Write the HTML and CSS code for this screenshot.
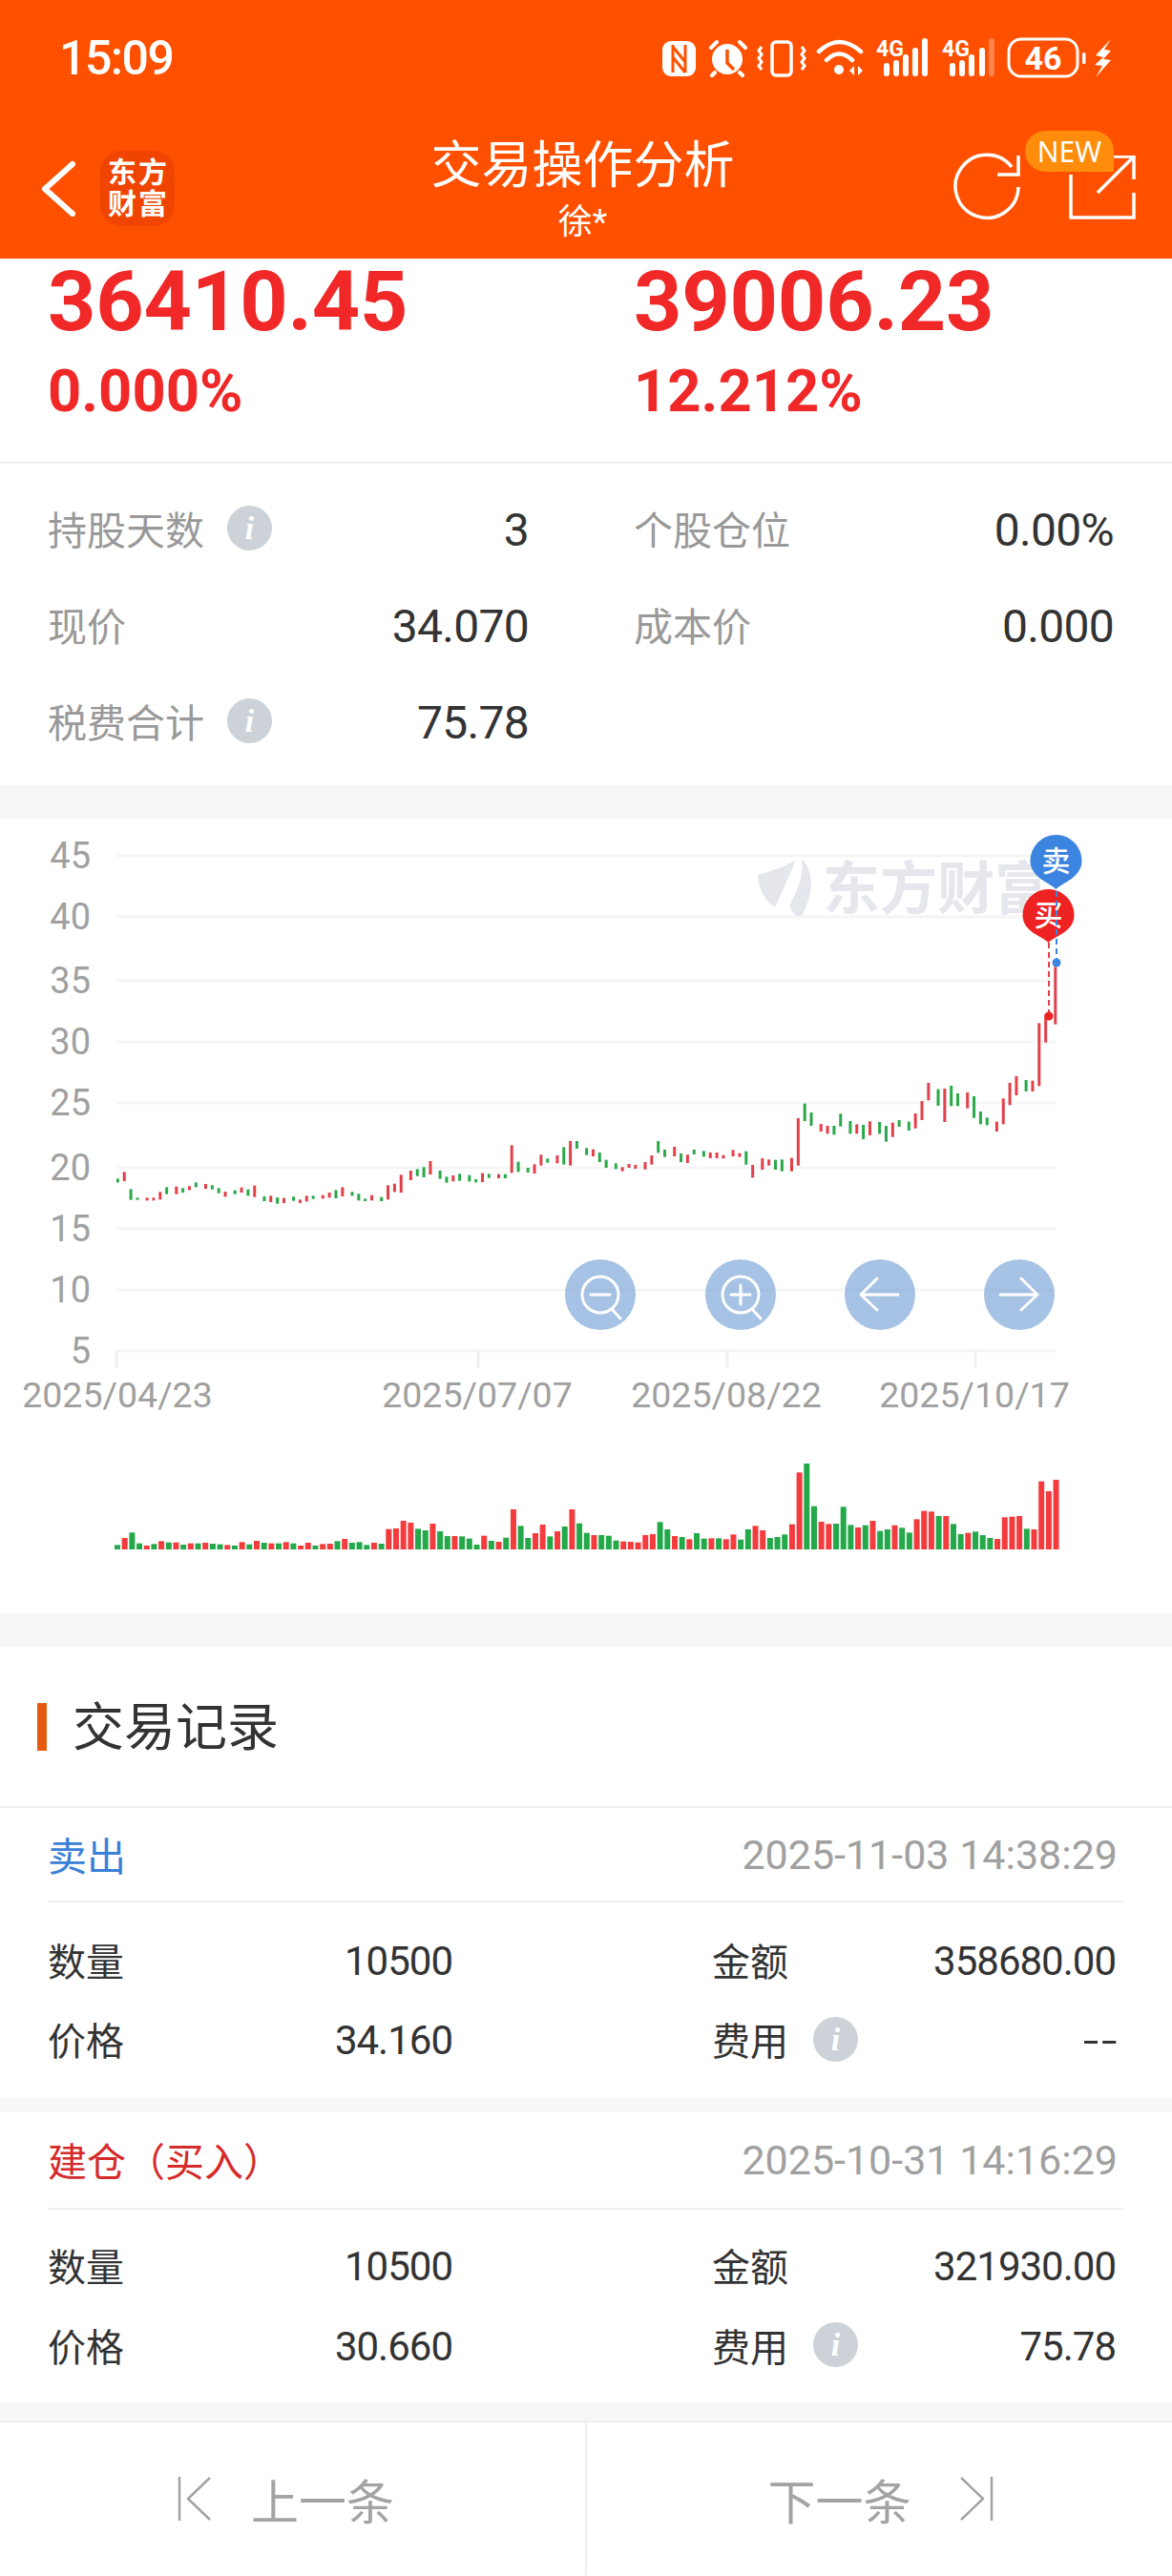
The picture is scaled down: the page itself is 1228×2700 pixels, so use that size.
FILE: index.html
```html
<!DOCTYPE html>
<html lang="zh-CN">
<head>
  <meta charset="UTF-8">
  <meta name="viewport" content="width=device-width, initial-scale=1.0">
  <title>交易操作分析</title>
  <link rel="stylesheet" href="styles.css">
</head>
<body>
  <header class="top">
    <div class="status-bar">
      <span class="clock">15:09</span>
      <svg class="status-icons" width="480" height="50" viewBox="690 36 480 50">
        <!-- nfc -->
        <rect x="694" y="43" width="35" height="37" rx="9" fill="#fff"/>
        <path d="M705 47V76M718 47V76M705 49L718 65M705 60L718 76" stroke="#ff5000" stroke-width="3" fill="none"/>
        <!-- alarm -->
        <circle cx="762" cy="62" r="16" fill="#fff"/>
        <path d="M745 50L751 44M775 44L781 50M749 76L746 79M775 76L778 79" stroke="#fff" stroke-width="4" stroke-linecap="round"/>
        <path d="M762 52V66L769 73" stroke="#ff5000" stroke-width="3.5" fill="none"/>
        <!-- vibrate -->
        <rect x="809" y="44" width="20" height="35" rx="4" stroke="#fff" stroke-width="3.5" fill="none"/>
        <path d="M798 49l-3 4 3 4-3 4 3 4-3 4 3 4" stroke="#fff" stroke-width="3" fill="none"/>
        <path d="M840 49l3 4-3 4 3 4-3 4 3 4-3 4" stroke="#fff" stroke-width="3" fill="none"/>
        <!-- wifi -->
        <path d="M858 54Q879 34 902 54M866 63Q879 50 893 63" stroke="#fff" stroke-width="4.5" stroke-linecap="round" fill="none"/>
        <circle cx="879" cy="73" r="5" fill="#fff"/>
        <path d="M890 74l5-5v10zM899 69l5 5-5 5z" fill="#fff"/>
        <!-- mobile signal, two cards -->
        <text class="net" x="918" y="59">4G</text>
        <path d="M929 69V77M939 66V77M949 60V77M959 53V77M969 43V77" stroke="#fff" stroke-width="6" stroke-linecap="round"/>
        <text class="net" x="987" y="59">4G</text>
        <path d="M998 69V77M1008 66V77M1018 60V77M1029 53V77" stroke="#fff" stroke-width="6" stroke-linecap="round"/>
        <path d="M1039 43V77" stroke="#fff" stroke-opacity=".3" stroke-width="6" stroke-linecap="round"/>
        <!-- battery -->
        <rect x="1057" y="41" width="72" height="39" rx="13" stroke="#fff" stroke-width="3" fill="none"/>
        <text class="batt" x="1093" y="73" text-anchor="middle">46</text>
        <rect x="1134" y="55" width="3.5" height="12" rx="1.5" fill="#fff"/>
        <path d="M1164 41L1148 58L1156 60L1147 68L1155 69L1148 81L1164 63L1156 62L1164 53L1157 52Z" fill="#fff"/>
      </svg>
    </div>
    <nav class="nav">
      <div class="nav-left">
        <svg class="back" width="40" height="64" viewBox="0 0 40 64"><path d="M33 6L4 32L33 58" stroke="#fff" stroke-width="6" stroke-linecap="round" stroke-linejoin="round" fill="none"/></svg>
        <div class="logo"><span>东方</span><span>财富</span></div>
      </div>
      <div class="nav-title">
        <h1>交易操作分析</h1>
        <p>徐*</p>
      </div>
      <div class="nav-right">
        <svg width="74" height="74" viewBox="0 0 74 74">
          <path d="M71 36A33 33 0 1 1 64 15" stroke="#fff" stroke-width="3.5" fill="none"/>
          <path d="M49 23H71V3" stroke="#fff" stroke-width="3.5" fill="none"/>
        </svg>
        <div class="share">
          <span class="badge">NEW</span>
          <svg width="72" height="70" viewBox="0 0 72 70">
            <path d="M4 20V65H70V39" stroke="#fff" stroke-width="3.5" fill="none"/>
            <path d="M49 1H70V25M70 1L32 39" stroke="#fff" stroke-width="3.5" fill="none"/>
          </svg>
        </div>
      </div>
    </nav>
  </header>

  <section class="summary">
    <div>
      <div class="amount">36410.45</div>
      <div class="rate">0.000%</div>
    </div>
    <div>
      <div class="amount">39006.23</div>
      <div class="rate">12.212%</div>
    </div>
  </section>

  <section class="facts">
    <div class="fact"><span class="fact-label">持股天数<i class="info">i</i></span><span class="fact-value">3</span></div>
    <div class="fact"><span class="fact-label">个股仓位</span><span class="fact-value">0.00%</span></div>
    <div class="fact"><span class="fact-label">现价</span><span class="fact-value">34.070</span></div>
    <div class="fact"><span class="fact-label">成本价</span><span class="fact-value">0.000</span></div>
    <div class="fact"><span class="fact-label">税费合计<i class="info">i</i></span><span class="fact-value">75.78</span></div>
  </section>

  <section class="chart-box">
    <!-- viewBox keeps the page's own y values so the data below reads straight -->
    <svg id="chart" width="1228" height="833" viewBox="0 858 1228 833">
      <g class="watermark">
        <path d="M794 917C810 912 825 908 834 901C828 915 822 930 812 951C803 945 795 935 794 917Z"/>
        <path d="M840 900C852 912 855 935 838 964C830 956 826 950 828 947C838 930 842 915 840 900Z"/>
        <text x="862" y="953">东方财富</text>
      </g>
      <g id="grid"></g>
      <g id="candles"></g>
      <g id="volume"></g>
      <g id="marks">
        <path d="M1106.5 932C1100 925 1079.5 920 1079.5 902A27 27 0 1 1 1133.5 902C1133.5 920 1113 925 1106.5 932Z" fill="#3b84e0"/>
        <text class="mark-text" x="1106.5" y="913">卖</text>
        <path d="M1098.5 988C1092 981 1071.5 977 1071.5 959A27 27 0 1 1 1125.5 959C1125.5 977 1105 981 1098.5 988Z" fill="#ee2222"/>
        <text class="mark-text" x="1098.5" y="970">买</text>
        <path d="M1099 988V1065" stroke="#e0404a" stroke-width="2" stroke-dasharray="6 4"/>
        <circle cx="1099" cy="1065" r="4.5" fill="#ee2222"/>
        <path d="M1107 934V1009" stroke="#3b84e0" stroke-width="2" stroke-dasharray="6 4"/>
        <circle cx="1107" cy="1009" r="4.5" fill="#3b84e0"/>
      </g>
      <g class="zoom-btns">
        <circle cx="629" cy="1357" r="37"/>
        <circle cx="776" cy="1357" r="37"/>
        <circle cx="922" cy="1357" r="37"/>
        <circle cx="1068" cy="1357" r="37"/>
      </g>
      <g class="zoom-icons">
        <circle cx="629" cy="1357" r="19"/>
        <path d="M619 1357H639M641 1372L650 1382"/>
        <circle cx="776" cy="1357" r="19"/>
        <path d="M766 1357H786M776 1347V1367M788 1372L797 1382"/>
        <path d="M902 1357H941M919 1340L902 1357L919 1373"/>
        <path d="M1048 1357H1087M1070 1340L1087 1357L1070 1373"/>
      </g>
    </svg>
  </section>

  <section class="records">
    <h2 class="records-title">交易记录</h2>

    <div class="record">
      <div class="record-head">
        <span class="side-sell">卖出</span>
        <span class="record-time">2025-11-03 14:38:29</span>
      </div>
      <div class="record-body">
        <div class="cell"><span>数量</span><b>10500</b></div>
        <div class="cell"><span>金额</span><b>358680.00</b></div>
        <div class="cell"><span>价格</span><b>34.160</b></div>
        <div class="cell"><span>费用<i class="info">i</i></span><b class="no-fee">--</b></div>
      </div>
    </div>

    <div class="record">
      <div class="record-head">
        <span class="side-buy">建仓（买入）</span>
        <span class="record-time">2025-10-31 14:16:29</span>
      </div>
      <div class="record-body">
        <div class="cell"><span>数量</span><b>10500</b></div>
        <div class="cell"><span>金额</span><b>321930.00</b></div>
        <div class="cell"><span>价格</span><b>30.660</b></div>
        <div class="cell"><span>费用<i class="info">i</i></span><b>75.78</b></div>
      </div>
    </div>
  </section>

  <footer class="pager">
    <div class="pager-btn prev">
      <svg width="36" height="48" viewBox="0 0 36 48"><path d="M2 1V47M34 2L11 24L34 46" stroke="#a3a3a3" stroke-width="2.5" fill="none"/></svg>
      <span>上一条</span>
    </div>
    <div class="pager-btn next">
      <span>下一条</span>
      <svg width="36" height="48" viewBox="0 0 36 48"><path d="M34 1V47M2 2L25 24L2 46" stroke="#a3a3a3" stroke-width="2.5" fill="none"/></svg>
    </div>
  </footer>

  <script src="chart.js"></script>
</body>
</html>
```

FILE: styles.css
```css
* { box-sizing: border-box; }
html, body { margin: 0; background: #fff; }
body { width: 1228px; height: 2700px; overflow: hidden; font-family: Roboto, "Noto Sans CJK SC", sans-serif; color: #333; }

.top { height: 271px; background: #ff5000; color: #fff; }
.status-bar { height: 124px; padding: 0 58px 2px 62px; display: flex; align-items: center; justify-content: space-between; }
.clock { font-size: 50px; font-weight: 500; letter-spacing: -1.5px; }
.status-icons { display: block; }
.net { font: 700 23px Roboto, sans-serif; fill: #fff; }
.batt { font: 700 34px Roboto, sans-serif; fill: #fff; }

.nav { height: 147px; padding: 0 38px 0 43px; display: grid; grid-template-columns: 1fr auto 1fr; }
.nav-left { display: flex; align-items: center; }
.back { display: block; }
.logo { width: 78px; height: 79px; margin-left: 22px; border-radius: 22px; background: #f04500; display: flex; flex-direction: column; align-items: center; justify-content: center; gap: 3px; padding-left: 2px; font-size: 30px; font-weight: 700; line-height: 30px; letter-spacing: 2px; }
.nav-title { text-align: center; padding: 18px 12px 0 0; }
.nav-title h1 { margin: 0; font-size: 53px; font-weight: 400; line-height: 64px; }
.nav-title p { margin: 0; font-size: 36px; line-height: 54px; }
.nav-right { display: flex; justify-content: flex-end; gap: 48px; padding-top: 36px; }
.nav-right svg { display: block; }
.share { position: relative; width: 72px; height: 70px; margin-top: 3px; }
.badge { position: absolute; left: -44px; top: -26px; width: 93px; height: 43px; background: #ff8c0a; border-radius: 24px 24px 0 24px; font: 400 30px/43px "Noto Sans", sans-serif; text-align: center; color: #fff; }

.summary { height: 215px; padding: 1px 0 0 50px; display: grid; grid-template-columns: 614px 1fr; border-bottom: 2px solid #eee; color: #f02828; }
.amount { font-size: 88px; font-weight: 700; line-height: 88px; letter-spacing: -.2px; }
.rate { font-size: 61.5px; font-weight: 700; line-height: 66px; margin-top: 17px; }

.facts { height: 372px; padding: 18px 0 0 50px; display: grid; grid-template-columns: 504px 503px; grid-auto-rows: 101px; column-gap: 110px; border-bottom: 35px solid #f7f7f7; }
.fact { display: flex; align-items: center; justify-content: space-between; }
.fact-label { display: flex; align-items: center; padding-bottom: 3px; font-size: 41px; color: #999; }
.fact-label .info { margin-left: 24px; }
.fact-value { font-size: 48px; letter-spacing: -.7px; padding-top: 2px; }
.info { width: 47px; height: 47px; margin-left: 26px; border-radius: 50%; background: #cdd2d9; color: #fff; font: italic 700 34px/47px "Liberation Serif", serif; text-align: center; display: inline-block; }

.chart-box { height: 868px; border-bottom: 35px solid #f7f7f7; }
#chart { display: block; }
.watermark { fill: #e6e7ec; }
.watermark text { font: 700 60px "Noto Sans CJK SC", sans-serif; }
.axis-text { font: 38px Roboto, sans-serif; fill: #a0a0a0; }
.date-text { font-size: 37.5px; }
.mark-text { font: 500 30px "Noto Sans CJK SC", sans-serif; fill: #fff; text-anchor: middle; }
.zoom-btns circle { fill: #6f9dd3; fill-opacity: .62; }
.zoom-icons circle, .zoom-icons path { fill: none; stroke: #fff; stroke-width: 3; stroke-linecap: round; stroke-linejoin: round; }

.records-title { height: 169px; margin: 0; padding: 0 0 6px 39px; display: flex; align-items: center; gap: 27px; font-size: 54px; font-weight: 400; border-bottom: 2px solid #eee; }
.records-title::before { content: ""; width: 10px; height: 50px; margin-top: 6px; background: #e65a10; }

.record { border-bottom: 16px solid #f7f7f7; }
.record:last-child { border-bottom-width: 19px; }
.record-head { height: 99px; margin: 0 50px; padding-right: 7px; display: flex; align-items: center; justify-content: space-between; font-size: 41px; border-bottom: 2px solid #f0f0f0; }
.record + .record .record-head { height: 102px; }
.side-sell { color: #3a80d6; padding-bottom: 2px; }
.side-buy { color: #d62b2b; padding-bottom: 2px; }
.record-time { font-size: 43px; color: #a0a0a0; }
.record-body { padding: 20px 59px 18px 50px; display: grid; grid-template-columns: 424px 423px; column-gap: 272px; grid-auto-rows: 83px; }
.record + .record .record-body { padding-top: 17px; padding-bottom: 17px; grid-auto-rows: 84px; }
.cell { display: flex; align-items: center; justify-content: space-between; font-size: 40px; }
.cell span { display: flex; align-items: center; padding-bottom: 3px; }
.cell b { font-size: 42px; font-weight: 400; letter-spacing: -1px; }
.cell .no-fee { margin-right: -4px; font-size: 60px; letter-spacing: 2px; font-weight: 300; line-height: 60px; }

.pager { height: 162px; display: flex; border-top: 2px solid #eee; color: #a3a3a3; font-size: 50px; }
.pager-btn { flex: 1; display: flex; align-items: center; justify-content: center; }
.pager-btn svg { display: block; }
.prev { gap: 41px; padding-right: 14px; border-right: 2px solid #eee; flex: none; width: 615px; }
.next { gap: 50px; padding-left: 2px; }
```

FILE: chart.js
```javascript
const NS = 'http://www.w3.org/2000/svg';
const RED = '#e2404a', GREEN = '#2aa84a';

// [top, bottom, colour], thirds of a pixel below y=860
const candles = [
  [1126,1138,'g'],[1105,1134,'r'],[1159,1193,'g'],[1186,1193,'g'],[1186,1195,'r'],[1186,1195,'r'],
  [1168,1192,'r'],[1153,1175,'g'],[1151,1175,'r'],[1156,1170,'g'],[1150,1162,'r'],[1138,1153,'g'],
  [1143,1158,'r'],[1147,1160,'g'],[1156,1172,'g'],[1167,1183,'r'],[1163,1175,'g'],[1154,1170,'r'],
  [1160,1180,'g'],[1148,1184,'r'],[1182,1197,'g'],[1180,1200,'r'],[1185,1205,'g'],[1187,1203,'r'],
  [1183,1196,'g'],[1192,1203,'r'],[1180,1198,'r'],[1180,1190,'g'],[1178,1189,'r'],[1170,1186,'r'],
  [1162,1188,'g'],[1153,1182,'r'],[1168,1180,'g'],[1174,1195,'g'],[1189,1197,'g'],[1178,1195,'r'],
  [1184,1197,'g'],[1147,1192,'r'],[1142,1168,'r'],[1114,1170,'r'],[1101,1131,'r'],[1096,1118,'g'],
  [1090,1122,'g'],[1071,1113,'r'],[1101,1127,'g'],[1120,1139,'g'],[1116,1135,'r'],[1111,1133,'g'],
  [1115,1135,'g'],[1128,1138,'g'],[1109,1137,'r'],[1111,1124,'g'],[1112,1125,'r'],[1112,1125,'g'],
  [1021,1108,'r'],[1073,1105,'g'],[1092,1107,'g'],[1081,1110,'r'],[1051,1085,'r'],[1063,1076,'g'],
  [1053,1078,'r'],[1027,1082,'g'],[1008,1085,'r'],[1008,1032,'g'],[1030,1052,'g'],[1034,1056,'r'],
  [1044,1074,'g'],[1067,1092,'g'],[1078,1096,'g'],[1090,1103,'r'],[1080,1092,'r'],[1083,1095,'r'],
  [1074,1097,'r'],[1053,1082,'r'],[1008,1045,'g'],[1035,1058,'g'],[1026,1056,'r'],[1047,1074,'g'],
  [1051,1077,'r'],[1035,1050,'g'],[1039,1057,'g'],[1044,1062,'r'],[1044,1062,'r'],[1052,1063,'r'],
  [1036,1056,'r'],[1046,1058,'r'],[1040,1082,'g'],[1083,1123,'r'],[1062,1098,'r'],[1066,1085,'r'],
  [1067,1098,'g'],[1066,1103,'g'],[1061,1103,'r'],[936,1085,'r'],[890,945,'g'],[918,960,'g'],
  [954,978,'r'],[960,985,'r'],[960,988,'g'],[922,962,'g'],[945,985,'g'],[955,985,'r'],
  [957,1002,'g'],[946,990,'r'],[948,985,'g'],[960,1010,'g'],[950,995,'r'],[942,963,'g'],
  [947,975,'g'],[921,968,'r'],[882,942,'r'],[825,880,'r'],[845,897,'g'],[843,948,'r'],
  [834,898,'g'],[858,898,'g'],[855,905,'r'],[867,935,'g'],[915,955,'g'],[934,958,'g'],
  [947,978,'r'],[874,955,'r'],[825,895,'r'],[804,864,'r'],[816,852,'g'],[818,852,'r'],
  [637,835,'r'],[610,698,'r'],[460,641,'r']
];

// bar tops, same thirds of a pixel, above the y=1624 base line
const volumes = [
  [358,'g'],[336,'r'],[319,'g'],[353,'g'],[360,'r'],[355,'g'],[346,'r'],[350,'g'],[350,'r'],[357,'g'],
  [353,'r'],[353,'g'],[351,'r'],[354,'g'],[356,'g'],[358,'r'],[360,'g'],[349,'r'],[356,'g'],[345,'r'],
  [351,'g'],[353,'r'],[353,'g'],[349,'r'],[353,'g'],[360,'r'],[351,'r'],[360,'g'],[355,'r'],[354,'r'],
  [346,'g'],[339,'r'],[351,'g'],[349,'g'],[358,'g'],[351,'r'],[354,'g'],[308,'r'],[306,'r'],[282,'r'],
  [288,'r'],[307,'g'],[312,'g'],[291,'r'],[315,'g'],[330,'g'],[330,'r'],[331,'g'],[338,'g'],[357,'g'],
  [329,'r'],[345,'g'],[348,'r'],[335,'g'],[246,'r'],[298,'g'],[336,'g'],[321,'r'],[294,'r'],[331,'g'],
  [315,'r'],[300,'g'],[246,'r'],[290,'g'],[320,'g'],[327,'r'],[327,'g'],[329,'g'],[344,'g'],[347,'r'],
  [348,'r'],[350,'r'],[327,'r'],[324,'r'],[286,'g'],[309,'g'],[330,'r'],[333,'g'],[340,'r'],[321,'g'],
  [338,'g'],[337,'r'],[337,'g'],[340,'r'],[325,'r'],[341,'g'],[309,'g'],[298,'r'],[312,'r'],[336,'g'],
  [333,'g'],[325,'g'],[293,'r'],[130,'r'],[102,'g'],[236,'g'],[285,'r'],[292,'r'],[291,'g'],[238,'g'],
  [295,'g'],[303,'r'],[296,'g'],[282,'r'],[314,'g'],[309,'g'],[296,'r'],[304,'g'],[319,'g'],[277,'r'],
  [251,'r'],[253,'r'],[267,'g'],[267,'r'],[292,'g'],[324,'g'],[320,'r'],[316,'g'],[327,'g'],[336,'g'],
  [339,'r'],[271,'r'],[269,'r'],[267,'r'],[307,'g'],[309,'r'],[158,'r'],[189,'r'],[153,'r']
];

const yTicks = [[45,897],[40,961],[35,1028],[30,1092],[25,1156],[20,1224],[15,1288],[10,1352],[5,1416]];
const xTicks = [[122,'2025/04/23',123],[501,'2025/07/07',500],[762,'2025/08/22',761],[1022,'2025/10/17',1021]];

function add(parent, tag, attrs, text) {
  const el = document.createElementNS(NS, tag);
  for (const k in attrs) el.setAttribute(k, attrs[k]);
  if (text !== undefined) el.textContent = text;
  parent.appendChild(el);
  return el;
}

const grid = document.getElementById('grid');
yTicks.forEach(([val, y]) => {
  add(grid, 'rect', { x: 122, y: y - 1.5, width: 985, height: 3, fill: '#f5f5f5' });
  add(grid, 'text', { class: 'axis-text', x: 95, y: y + 13, 'text-anchor': 'end' }, val);
});
xTicks.forEach(([x, label, textX]) => {
  add(grid, 'rect', { x: x - 1.5, y: 1416, width: 3, height: 18, fill: '#f0f0f0' });
  add(grid, 'text', { class: 'axis-text date-text', x: textX, y: 1475, 'text-anchor': 'middle' }, label);
});

// candles come in runs of four on the canvas
const candleBox = document.getElementById('candles');
candles.forEach(([top, bottom, c], i) => {
  const x = 123.4 + Math.floor(i / 4) * 30.7 + (i % 4) * 6.85;
  add(candleBox, 'rect', {
    x: x - 1.5, y: 860 + top / 3, width: 3, height: (bottom - top) / 3,
    fill: c === 'r' ? RED : GREEN
  });
});

const volumeBox = document.getElementById('volume');
volumes.forEach(([top, c], i) => {
  add(volumeBox, 'rect', {
    x: 120 + i * 7.684, y: 1500 + top / 3, width: 6, height: (372 - top) / 3,
    fill: c === 'r' ? '#f43b3d' : '#24a94a'
  });
});
```
